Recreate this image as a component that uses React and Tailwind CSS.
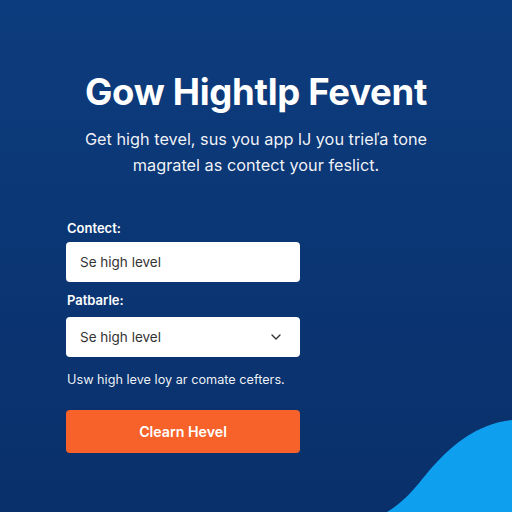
import { ChevronDown } from 'lucide-react'

const Wave = () => (
  <svg className="absolute bottom-0 right-0" width="130" height="100" viewBox="0 0 130 100">
    <path d="M5 100 C 30 85, 40 65, 55 50 C 72 32, 95 12, 130 8 L130 100 Z" fill="#0ea0ef" />
  </svg>
)

export default function App() {
  return (
    <div
      className="relative w-[512px] h-[512px] overflow-hidden bg-gradient-to-b from-[#0d3c7e] to-[#09306a] text-white"
      style={{ fontFamily: 'Inter, "Liberation Sans", sans-serif' }}
    >
      <div className="flex flex-col items-center pt-[70px]">
        <h1 className="text-[36.5px] font-bold leading-[44px] tracking-[-0.3px]">Gow Hightlp Fevent</h1>
        <p className="mt-[12px] text-[16.3px] leading-[26px] text-center text-white/95">
          Get high tevel, sus you app lJ you trieľa tone
          <br />
          magratel as contect your feslict.
        </p>
      </div>

      <form className="flex flex-col w-[234px] ml-[66px] mt-[41px]">
        <label className="text-[13px] font-semibold leading-[18px] ml-[1px]">Contect:</label>
        <div className="mt-[5px] h-[40px] rounded-[4px] bg-white flex items-center px-[14px] text-[13.5px] text-[#333]">
          Se high level
        </div>

        <label className="mt-[9px] text-[13px] font-semibold leading-[18px] ml-[1px]">Patbarle:</label>
        <div className="mt-[8px] h-[40px] rounded-[4px] bg-white flex items-center justify-between pl-[14px] pr-[16px] text-[13.5px] text-[#333]">
          <span>Se high level</span>
          <ChevronDown size={16} strokeWidth={2} className="text-[#333]" />
        </div>

        <p className="mt-[14px] text-[12.7px] leading-[18px] text-white/95 ml-[1px]">Usw high leve loy ar comate cefters.</p>

        <button
          type="button"
          className="mt-[21px] h-[43px] rounded-[4px] bg-[#f6622a] text-[14.2px] font-semibold text-white"
        >
          Clearn Hevel
        </button>
      </form>

      <Wave />
    </div>
  )
}
